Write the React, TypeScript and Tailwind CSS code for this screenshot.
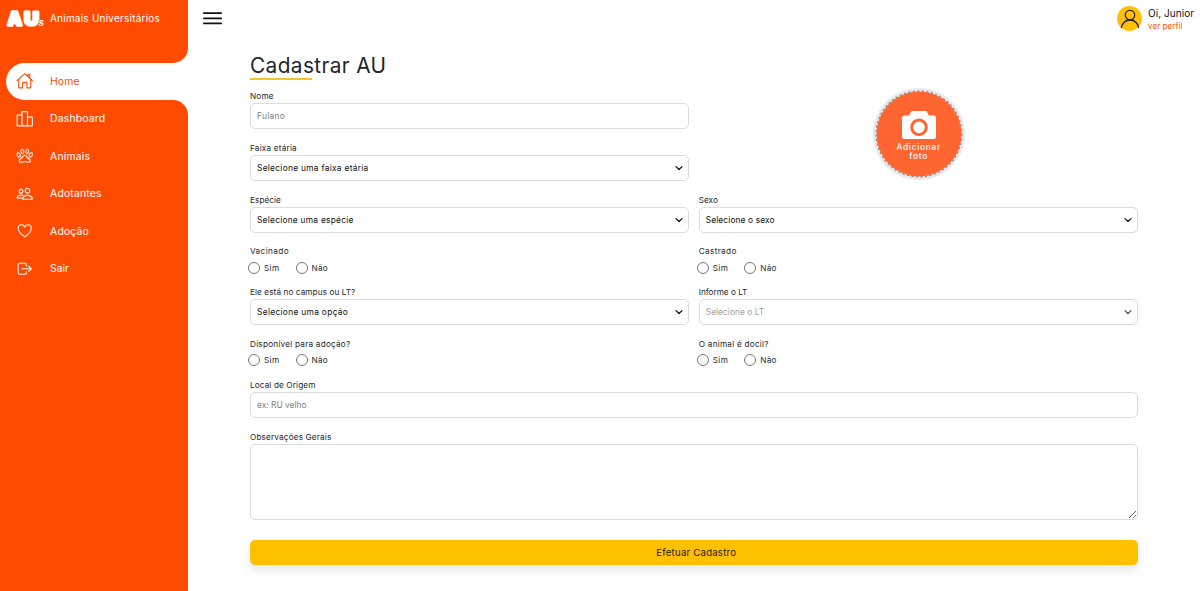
import type { ReactNode } from "react";
import {
  IoHomeOutline,
  IoPodiumOutline,
  IoPawOutline,
  IoPeopleOutline,
  IoHeartOutline,
  IoLogOutOutline,
} from "react-icons/io5";

const items = [
  { label: "Dashboard", Icon: IoPodiumOutline, tracking: "tracking-[0.18px]" },
  { label: "Animais", Icon: IoPawOutline, tracking: "tracking-[0.21px]" },
  { label: "Adotantes", Icon: IoPeopleOutline, tracking: "tracking-[0.18px]" },
  { label: "Adoção", Icon: IoHeartOutline, tracking: "tracking-[0.17px]" },
  { label: "Sair", Icon: IoLogOutOutline, tracking: "tracking-[0px]" },
];

function Sidebar() {
  return (
    <aside className="flex w-[187.5px] shrink-0 flex-col bg-white">
      <div className="flex h-[62.5px] items-start rounded-br-[15px] bg-[#ff4b00]">
        <div className="flex h-[36px] w-full items-center pl-[6px] text-white">
          <svg className="h-[22px] w-[44px] shrink-0" viewBox="0 0 44 22">
            <g fontFamily="Inter, sans-serif" fontWeight="800" fill="#fff" stroke="#fff" strokeLinejoin="round">
              <text x="2" y="18" fontSize="18" strokeWidth="3.6" textLength="13.5" lengthAdjust="spacingAndGlyphs">A</text>
              <text x="18.2" y="18" fontSize="18" strokeWidth="3.2" textLength="14.5" lengthAdjust="spacingAndGlyphs">U</text>
            </g>
            <text x="32.6" y="19" fontFamily="Inter, sans-serif" fontWeight="600" fontStyle="italic" fontSize="10" fill="#fff" stroke="#ff4b00" strokeWidth="1.2" paintOrder="stroke">s</text>
          </svg>
          <span className="text-[10px] leading-4 tracking-[0.22px]">Animais Universitários</span>
        </div>
      </div>
      <nav className="flex flex-1 flex-col">
        <div className="bg-[#ff4b00] pl-[6.25px]">
          <a className="flex h-[37.5px] items-center rounded-l-[18.75px] bg-white pl-[10px] text-[#ff4b00]">
            <IoHomeOutline className="-mt-px size-[17.5px]" />
            <span className="ml-[16.3px] pt-px text-[10.4px] tracking-[0.1px]">Home</span>
          </a>
        </div>
        <div className="flex-1 rounded-tr-[15px] bg-[#ff4b00] text-[#fff5ee]">
          {items.map(({ label, Icon, tracking }) => (
            <a key={label} className="flex h-[37.5px] items-center pl-[16.25px]">
              <Icon className="-mt-px size-[17.5px]" />
              <span className={`ml-[16.3px] pt-px text-[10.4px] text-white ${tracking}`}>{label}</span>
            </a>
          ))}
        </div>
      </nav>
    </aside>
  );
}

function Label({ children, tracking }: { children: ReactNode; tracking: string }) {
  return <div className={`h-[13px] text-[8.2px] leading-[12.5px] whitespace-nowrap text-[#24282c] ${tracking}`}>{children}</div>;
}

const box = "h-[26px] w-full rounded-[5px] border border-[#d9dcdf] bg-white px-[6px] text-[8.4px]";

function SelectBox({ children, tracking, disabled }: { children: ReactNode; tracking: string; disabled?: boolean }) {
  return (
    <div className={`${box} flex items-center justify-between pr-[5px] ${disabled ? "text-[#a0a0a0]" : "text-[#111]"}`}>
      <span className={tracking}>{children}</span>
      <svg className="size-[8px]" viewBox="0 0 8 8" fill="none">
        <path d="M1 2.6 4 5.5 7 2.6" stroke={disabled ? "#555" : "#111"} strokeWidth="1.3" strokeLinecap="round" strokeLinejoin="round" />
      </svg>
    </div>
  );
}

function Radio({ name }: { name: string }) {
  return (
    <div className="-ml-[2px] flex h-[20px] items-center text-[8.2px] text-[#24282c]">
      <label className="flex w-[47.5px] items-center">
        <input type="radio" name={name} className="size-[12px] shrink-0 appearance-none rounded-full border border-[#777]" />
        <span className="ml-[4px] tracking-[0.35px]">Sim</span>
      </label>
      <label className="flex items-center">
        <input type="radio" name={name} className="size-[12px] shrink-0 appearance-none rounded-full border border-[#777]" />
        <span className="ml-[4px] tracking-[0.27px]">Não</span>
      </label>
    </div>
  );
}

function PhotoPicker() {
  return (
    <div className="row-span-2 flex justify-center pl-[1px]">
      <button className="relative -mt-[2px] flex size-[92px] flex-col items-center rounded-full bg-[#e8e8ea] pt-[23px] text-white">
        <svg className="absolute inset-0 size-full" viewBox="0 0 93 93">
          <circle cx="46.5" cy="46.5" r="43" fill="#ff6530" />
          <circle cx="46.5" cy="46.5" r="43.4" fill="none" stroke="#8d8580" strokeWidth="1.2" strokeDasharray="2.3 2.3" />
        </svg>
        <svg className="relative h-[28px] w-[34px] shrink-0" viewBox="0 0 34 28">
          <path d="M2.5 4.5H7.2L8.6 1.4Q9.2 0 10.7 0H23.3Q24.8 0 25.4 1.4L26.8 4.5H31.5Q34 4.5 34 7V25.5Q34 28 31.5 28H2.5Q0 28 0 25.5V7Q0 4.5 2.5 4.5Z" fill="#fff" />
          <circle cx="17" cy="16.3" r="7.3" fill="none" stroke="#ff6530" strokeWidth="2.9" />
        </svg>
        <span className="relative mt-[3.5px] flex flex-col text-center text-[8.4px] leading-[9px] font-medium">
          <span className="tracking-[0.7px]">Adicionar</span>
          <span className="tracking-[0.7px]">foto</span>
        </span>
      </button>
    </div>
  );
}

export default function App() {
  return (
    <div className="flex h-[591px] overflow-hidden bg-white font-['Inter',sans-serif]">
      <Sidebar />
      <div className="flex min-w-0 flex-1 flex-col">
        <header className="flex h-[37.5px] shrink-0 items-center justify-between pr-[6px] pl-[15.5px]">
          <svg className="h-[13px] w-[19px]" viewBox="0 0 19 13" stroke="#111" strokeWidth="1.8" strokeLinecap="round">
            <path d="M.9 1.2H18.1M.9 6.3H18.1M.9 11.4H18.1" />
          </svg>
          <div className="flex items-center">
            <div className="flex size-[25px] items-center justify-center rounded-full bg-[#ffc107]">
              <svg className="size-[20px]" viewBox="0 0 20 20" fill="none" stroke="#222" strokeWidth="1.3" strokeLinecap="round">
                <circle cx="10" cy="6.1" r="4.7" />
                <path d="M1.3 18.6C2.6 14 5.8 11 10 11S17.4 14 18.7 18.6" />
              </svg>
            </div>
            <div className="ml-[6px] flex flex-col pt-px whitespace-nowrap">
              <span className="text-[10px] leading-[14px] tracking-[0.05px] text-[#111]">Oi, Junior</span>
              <span className="text-[8px] leading-[12px] tracking-[0.07px] text-[#ff4b00]">ver perfil</span>
            </div>
          </div>
        </header>

        <main className="flex flex-col pr-[62.5px] pl-[62.5px]">
          <h1 className="mt-[15px] text-[20.8px] leading-[25.5px] tracking-[0.4px] text-[#212529]">Cadastrar AU</h1>
          <div className="h-[2px] w-[62px] bg-[#f4c430]" />
          <form className="mt-[10px] grid grid-cols-2 grid-rows-[52px_52px_51px_41px_51.5px_41px_52px] gap-x-[10px]">
            <div>
              <Label tracking="tracking-[0.2px]">Nome</Label>
              <input className={`${box} block tracking-[0.27px] outline-none placeholder:text-[#7b7f83]`} placeholder="Fulano" />
            </div>
            <PhotoPicker />
            <div>
              <Label tracking="tracking-[0.2px]">Faixa etária</Label>
              <SelectBox tracking="tracking-[0.28px]">Selecione uma faixa etária</SelectBox>
            </div>
            <div>
              <Label tracking="tracking-[0.07px]">Espécie</Label>
              <SelectBox tracking="tracking-[0.24px]">Selecione uma espécie</SelectBox>
            </div>
            <div>
              <Label tracking="tracking-[0px]">Sexo</Label>
              <SelectBox tracking="tracking-[0.11px]">Selecione o sexo</SelectBox>
            </div>
            <div>
              <Label tracking="tracking-[0.39px]">Vacinado</Label>
              <Radio name="vacinado" />
            </div>
            <div>
              <Label tracking="tracking-[0.34px]">Castrado</Label>
              <Radio name="castrado" />
            </div>
            <div>
              <Label tracking="tracking-[0.09px]">Ele está no campus ou LT?</Label>
              <SelectBox tracking="tracking-[0.31px]">Selecione uma opção</SelectBox>
            </div>
            <div>
              <Label tracking="tracking-[0px]">Informe o LT</Label>
              <SelectBox tracking="tracking-[0.03px]" disabled>Selecione o LT</SelectBox>
            </div>
            <div>
              <Label tracking="tracking-[0.23px]">Disponível para adoção?</Label>
              <Radio name="adocao" />
            </div>
            <div>
              <Label tracking="tracking-[0.24px]">O animal é docil?</Label>
              <Radio name="docil" />
            </div>
            <div className="col-span-2">
              <Label tracking="tracking-[0.12px]">Local de Origem</Label>
              <input className={`${box} block outline-none placeholder:text-[#7b7f83]`} placeholder="ex: RU velho" />
            </div>
            <div className="col-span-2">
              <Label tracking="tracking-[0.155px]">Observações Gerais</Label>
              <textarea className="block h-[76.5px] w-full resize rounded-[5px] border border-[#d9dcdf] outline-none" />
            </div>
            <button className="col-span-2 mt-[20px] h-[25px] rounded-[5px] bg-[#ffc000] pt-px pl-[5px] text-[9.6px] tracking-[0.23px] text-[#241a00] shadow-[0_5px_10px_rgba(0,0,0,0.1)]">
              Efetuar Cadastro
            </button>
          </form>
        </main>
      </div>
    </div>
  );
}
